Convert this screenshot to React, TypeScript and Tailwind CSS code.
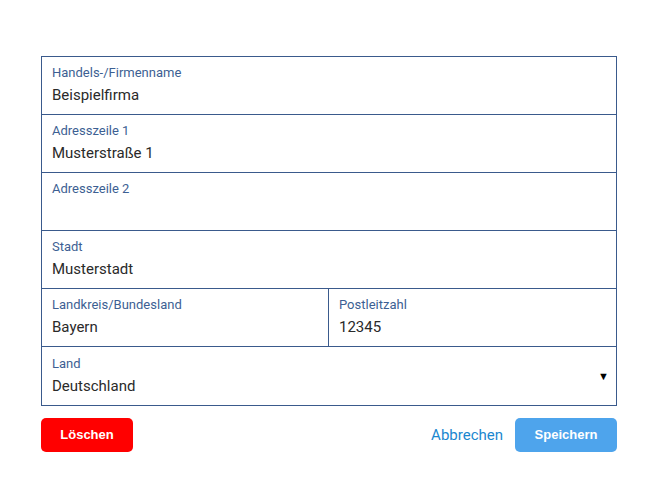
import React from 'react';

const labelCls = 'block text-[13px] leading-4 text-[#3d5f93]';
const valueCls = 'mt-[4px] block text-[15px] leading-[20px] text-[#2a2a2a] h-[20px]';

function Field({ label, value, className = '' }: { label: string; value: string; className?: string }) {
  return (
    <div className={`px-[10px] pt-[8px] ${className}`}>
      <span className={labelCls}>{label}</span>
      <span className={valueCls}>{value}</span>
    </div>
  );
}

export default function App() {
  return (
    <div className="min-h-screen bg-white pt-[56px]" style={{ fontFamily: 'Roboto, "Noto Sans", sans-serif' }}>
      <div className="ml-[41px] w-[576px]">
        <div className="border border-[#3a5a8c]">
          <Field label="Handels-/Firmenname" value="Beispielfirma" className="h-[58px] border-b border-[#3a5a8c]" />
          <Field label="Adresszeile 1" value="Musterstraße 1" className="h-[58px] border-b border-[#3a5a8c]" />
          <Field label="Adresszeile 2" value="" className="h-[58px] border-b border-[#3a5a8c]" />
          <Field label="Stadt" value="Musterstadt" className="h-[58px] border-b border-[#3a5a8c]" />
          <div className="grid h-[58px] grid-cols-2 border-b border-[#3a5a8c]">
            <Field label="Landkreis/Bundesland" value="Bayern" className="border-r border-[#3a5a8c]" />
            <Field label="Postleitzahl" value="12345" />
          </div>
          <div className="relative h-[58px] px-[10px] pt-[9px]">
            <span className={labelCls}>Land</span>
            <span className={valueCls}>Deutschland</span>
            <span className="absolute right-[7px] top-[24px] text-[11px] leading-none text-black">▼</span>
          </div>
        </div>
        <div className="mt-[12px] flex items-center justify-between">
          <button
            className="h-[34px] w-[92px] rounded-[5px] bg-[#ff0000] text-[13px] font-bold text-white"
            style={{ fontFamily: '"Liberation Sans", Arial, sans-serif' }}
          >
            Löschen
          </button>
          <div className="flex items-center gap-[12px]">
            <button className="text-[15px] text-[#1b87cf]">Abbrechen</button>
            <button
              className="h-[34px] w-[102px] rounded-[5px] bg-[#4ea4ec] text-[13px] font-bold text-white"
              style={{ fontFamily: '"Liberation Sans", Arial, sans-serif' }}
            >
              Speichern
            </button>
          </div>
        </div>
      </div>
    </div>
  );
}
